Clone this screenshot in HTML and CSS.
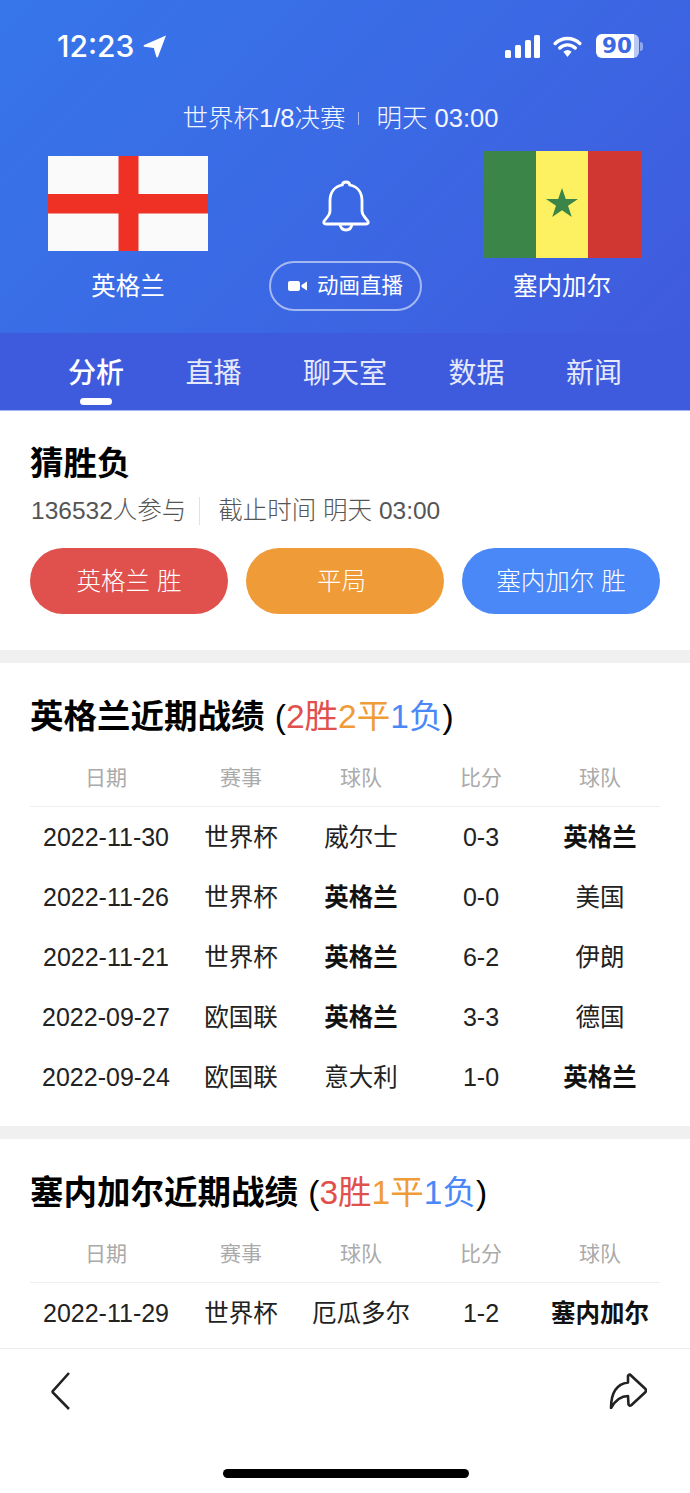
FILE: index.html
```html
<!DOCTYPE html>
<html lang="zh">
<head>
<meta charset="utf-8">
<title>英格兰 vs 塞内加尔</title>
<link rel="stylesheet" href="styles.css">
</head>
<body>
<div class="page">
  <header class="hero">
    <div class="status">
      <div class="status-left">
        <span class="clock">12:23</span>
        <svg class="loc" viewBox="0 0 24 23" width="24" height="23"><path d="M23 .6 L1.200 10 Q-.2 11 1.400 11.800 L10.800 13 L13.400 22 Q14.400 23.200 15 21.800 Z" fill="#fff"/></svg>
      </div>
      <div class="status-right">
        <svg width="35" height="23" viewBox="0 0 35 23"><rect x="0" y="15" width="6" height="8" rx="1.500" fill="#fff"/><rect x="10" y="10" width="6" height="13" rx="1.500" fill="#fff"/><rect x="20" y="5" width="6" height="18" rx="1.500" fill="#fff"/><rect x="29" y="0" width="6" height="23" rx="1.500" fill="#fff"/></svg>
        <svg class="wifi" width="29" height="23" viewBox="0 0 29 23"><path d="M2.200 8.500a17.500 17.500 0 0 1 24.600 0M6.800 13a11 11 0 0 1 15.400 0" fill="none" stroke="#fff" stroke-width="3.400" stroke-linecap="round"/><path d="M10.400 16.800a6.400 6.400 0 0 1 8.200 0L14.500 22z" fill="#fff"/></svg>
        <div class="battery"><span class="battery-num">90</span></div>
        <span class="battery-tip"></span>
      </div>
    </div>
    <div class="match-line"><span>世界杯1/8决赛</span><i class="match-sep"></i><span>明天 03:00</span></div>
    <div class="teams">
      <div class="team team-home">
        <svg class="flag-en" viewBox="0 0 160 95" width="160" height="95"><rect width="160" height="95" fill="#fafafa"/><rect x="70.500" width="20" height="95" fill="#ee3124"/><rect y="38" width="160" height="19.500" fill="#ee3124"/></svg>
        <div class="team-name">英格兰</div>
      </div>
      <div class="center">
        <svg class="bell" viewBox="0 0 48 52" width="48" height="52"><path d="M24 2c-2 0-3.500 1.300-3.800 3C12.500 6.500 8 12.500 8 21v10c0 2.500-1 4-3 6.500l-2.500 3C1 42.500 2 44 4 44h40c2 0 3-1.500 1.500-3.500l-2.500-3c-2-2.500-3-4-3-6.500V21c0-8.500-4.500-14.500-12.200-16C27.500 3.300 26 2 24 2z" fill="none" stroke="#fff" stroke-width="2.800"/><path d="M18 44c.5 4 3 6 6 6s5.500-2 6-6" fill="none" stroke="#fff" stroke-width="2.800"/></svg>
        <div class="live-btn">
          <svg width="20" height="12" viewBox="0 0 20 12"><rect x="0" y="1" width="12" height="10" rx="2" fill="#fff"/><path d="M13.500 5 L19 1.500 V10.500 L13.500 7 Z" fill="#fff"/></svg>
          <span>动画直播</span>
        </div>
      </div>
      <div class="team team-away">
        <div class="flag-sn">
          <span class="sn-green"></span>
          <span class="sn-yellow"><svg class="star" viewBox="0 0 34 34" width="34" height="32" preserveAspectRatio="none"><path d="M17 1l3.800 11.800H33l-10 7.200 3.800 11.800L17 24.600 7.200 31.800 11 20 1 12.800h12.200z" fill="#3a8547"/></svg></span>
          <span class="sn-red"></span>
        </div>
        <div class="team-name">塞内加尔</div>
      </div>
    </div>
  </header>

  <nav class="tabs">
    <div class="tab tab-active">分析</div>
    <div class="tab">直播</div>
    <div class="tab">聊天室</div>
    <div class="tab">数据</div>
    <div class="tab">新闻</div>
  </nav>

  <main class="content">
    <section class="guess">
      <h2 class="guess-title">猜胜负</h2>
      <div class="guess-meta"><span>136532人参与</span><i class="meta-sep"></i><span>截止时间 明天 03:00</span></div>
      <div class="guess-btns">
        <div class="pill pill-red">英格兰 胜</div>
        <div class="pill pill-orange">平局</div>
        <div class="pill pill-blue">塞内加尔 胜</div>
      </div>
    </section>

    <section class="record">
      <h2 class="record-title">英格兰近期战绩 <span class="tally">(<b class="red">2胜</b><b class="orange">2平</b><b class="blue">1负</b>)</span></h2>
      <div class="row row-head"><span>日期</span><span>赛事</span><span>球队</span><span>比分</span><span>球队</span></div>
      <div class="row"><span class="num">2022-11-30</span><span>世界杯</span><span>威尔士</span><span class="num">0-3</span><span class="win">英格兰</span></div>
      <div class="row"><span class="num">2022-11-26</span><span>世界杯</span><span class="win">英格兰</span><span class="num">0-0</span><span>美国</span></div>
      <div class="row"><span class="num">2022-11-21</span><span>世界杯</span><span class="win">英格兰</span><span class="num">6-2</span><span>伊朗</span></div>
      <div class="row"><span class="num">2022-09-27</span><span>欧国联</span><span class="win">英格兰</span><span class="num">3-3</span><span>德国</span></div>
      <div class="row"><span class="num">2022-09-24</span><span>欧国联</span><span>意大利</span><span class="num">1-0</span><span class="win">英格兰</span></div>
    </section>

    <section class="record">
      <h2 class="record-title">塞内加尔近期战绩 <span class="tally">(<b class="red">3胜</b><b class="orange">1平</b><b class="blue">1负</b>)</span></h2>
      <div class="row row-head"><span>日期</span><span>赛事</span><span>球队</span><span>比分</span><span>球队</span></div>
      <div class="row"><span class="num">2022-11-29</span><span>世界杯</span><span>厄瓜多尔</span><span class="num">1-2</span><span class="win">塞内加尔</span></div>
    </section>
  </main>

  <footer class="bottom">
    <div class="toolbar">
      <svg viewBox="0 0 20 38" width="20" height="38"><path d="M19 1 L2.800 19 Q2.200 19.500 2.800 20.500 L19 37" fill="none" stroke="#222" stroke-width="2.600"/></svg>
      <svg viewBox="0 0 38 36" width="38" height="36"><path d="M2 35C2 20 8 11 19 9.500L19 3Q20.500 .5 22 2.500L36 15.500Q38 17.500 36 19.500L22.500 32Q20.500 33.500 19.500 31.500L19 23C11 23 6 28 2 35Z" fill="none" stroke="#222" stroke-width="2.600" stroke-linejoin="round"/></svg>
    </div>
    <div class="home-bar"></div>
  </footer>
</div>
</body>
</html>
```

FILE: styles.css
```css
* { box-sizing: border-box; }
html, body { margin: 0; padding: 0; }
body {
  font-family: "Liberation Sans", "Noto Sans CJK SC", sans-serif;
  background: #fff;
  color: #000;
}
.page {
  width: 690px;
  height: 1493px;
  display: flex;
  flex-direction: column;
  overflow: hidden;
}
.hero {
  height: 333px;
  flex: none;
  color: #fff;
  background: linear-gradient(135deg, #3675ea 0%, #3b68e4 55%, #3f5bdd 100%);
  padding-top: 30px;
}
.status {
  height: 32px;
  display: flex;
  justify-content: space-between;
  align-items: center;
  padding: 0 47px 0 57px;
}
.status-left { display: flex; align-items: center; gap: 9px; }
.clock { font-family: "Inter", "Liberation Sans", sans-serif; font-size: 30px; line-height: 32px; font-weight: 500; }
.status-right { display: flex; align-items: center; }
.wifi { margin-left: 13px; }
.battery {
  margin-left: 14px;
  width: 43px;
  height: 24px;
  border-radius: 6px;
  background: linear-gradient(90deg, #fff 88%, #b9c9f5 88%);
  display: flex;
  align-items: center;
  padding-left: 6px;
}
.battery-num { font-family: "DejaVu Sans", sans-serif; font-size: 21.500px; font-weight: 700; color: #3c68e4; line-height: 1; }
.battery-tip { width: 3px; height: 9px; margin-left: 1px; background: #8fa8ee; border-radius: 0 3px 3px 0; }
.match-line {
  margin-top: 41px;
  height: 30px;
  line-height: 30px;
  display: flex;
  justify-content: center;
  align-items: center;
  font-size: 25.500px;
  font-weight: 300;
  color: #f2f5ff;
  padding-right: 9px;
}
.match-sep { width: 1px; height: 13px; background: #a9bcf3; margin: 0 18px 0 12px; }
.teams {
  display: flex;
  justify-content: space-between;
  padding: 0 48px;
}
.team { display: flex; flex-direction: column; align-items: center; }
.team-home { width: 160px; padding-top: 23px; }
.team-away { width: 158px; margin-right: 1px; padding-top: 18px; }
.team-name { font-size: 24.500px; line-height: 30px; }
.team-home .team-name { margin-top: 21px; }
.team-away .team-name { margin-top: 14px; }
.flag-en { display: block; }
.flag-sn { display: flex; width: 158px; height: 107px; }
.flag-sn span { flex: 1; display: flex; align-items: center; justify-content: center; }
.star { margin-bottom: 4px; }
.sn-green { background: #3a8547; }
.sn-yellow { background: #fdf061; }
.sn-red { background: #d03732; }
.center { display: flex; flex-direction: column; align-items: center; padding-top: 47px; }
.bell { display: block; }
.live-btn {
  margin-top: 29px;
  width: 153px;
  height: 50px;
  border: 2px solid #a4b8f2;
  border-radius: 25px;
  display: flex;
  align-items: center;
  justify-content: center;
  gap: 9px;
  font-size: 21.500px;
  line-height: 30px;
  color: #fff;
}
.tabs {
  height: 78px;
  flex: none;
  background: #3f5bdd;
  border-bottom: 1px solid #a5b4ef;
  display: flex;
  justify-content: center;
  gap: 61.500px;
  color: #e6e9fb;
  font-size: 28px;
  line-height: 36px;
}
.tab { padding-top: 23px; position: relative; white-space: nowrap; }
.tab-active { color: #fff; font-weight: 500; }
.tab-active::after {
  content: "";
  position: absolute;
  left: 12px;
  width: 32px;
  top: 65px;
  height: 7px;
  background: #fff;
  border-radius: 4px;
}
.content { flex: 1; overflow: hidden; min-height: 0; }
.guess { padding: 31px 30px 0; height: 252px; border-bottom: 13px solid #f0f0f0; }
.guess-title { margin: 0; font-size: 33.500px; line-height: 44px; font-weight: 700; }
.guess-meta {
  margin-top: 10px;
  display: flex;
  align-items: center;
  height: 30px;
  line-height: 30px;
  font-size: 24.500px;
  color: #555;
  font-weight: 300;
  padding-left: 1px;
}
.meta-sep { width: 1px; height: 28px; background: #e2e2e2; margin: 0 18px 0 13px; }
.guess-btns { display: flex; justify-content: space-between; margin-top: 22px; }
.pill {
  width: 198px;
  height: 66px;
  border-radius: 33px;
  color: #fff;
  font-size: 24.500px;
  line-height: 30px;
  font-weight: 300;
  display: flex;
  align-items: center;
  justify-content: center;
  padding-top: 2px;
}
.pill-red { background: #e0504c; }
.pill-orange { background: #ef9b37; padding-right: 7px; }
.pill-blue { background: #4a88f7; }
.record { padding: 31px 30px 19px; border-bottom: 13px solid #f0f0f0; }
.record-title { margin: 0; font-size: 33.500px; line-height: 46px; font-weight: 700; white-space: nowrap; }
.tally { font-weight: 400; margin-left: 1px; }
.tally b { font-weight: 400; }
.red { color: #e0504c; }
.orange { color: #ef9b37; }
.blue { color: #4a88f7; }
.row {
  display: grid;
  grid-template-columns: 152px 118px 122px 118px 120px;
  height: 60px;
  line-height: 30px;
  align-items: center;
  text-align: center;
  font-size: 24.500px;
  color: #222;
  white-space: nowrap;
}
.row span { padding-top: 2px; }
.row .num { font-size: 25px; padding-top: 0; }
.row-head {
  margin-top: 12px;
  height: 55px;
  font-size: 21px;
  color: #aaa;
  border-bottom: 1px solid #eee;
  padding-bottom: 2px;
}
.row-head span { padding-top: 0; }
.win { font-weight: 700; color: #111; }
.bottom { height: 145px; flex: none; background: #fff; border-top: 1px solid #ebebeb; }
.toolbar {
  display: flex;
  justify-content: space-between;
  align-items: center;
  padding: 23px 43px 0 50px;
}
.home-bar { width: 246px; height: 9px; background: #000; border-radius: 5px; margin: 59px auto 0 223px; }
```
